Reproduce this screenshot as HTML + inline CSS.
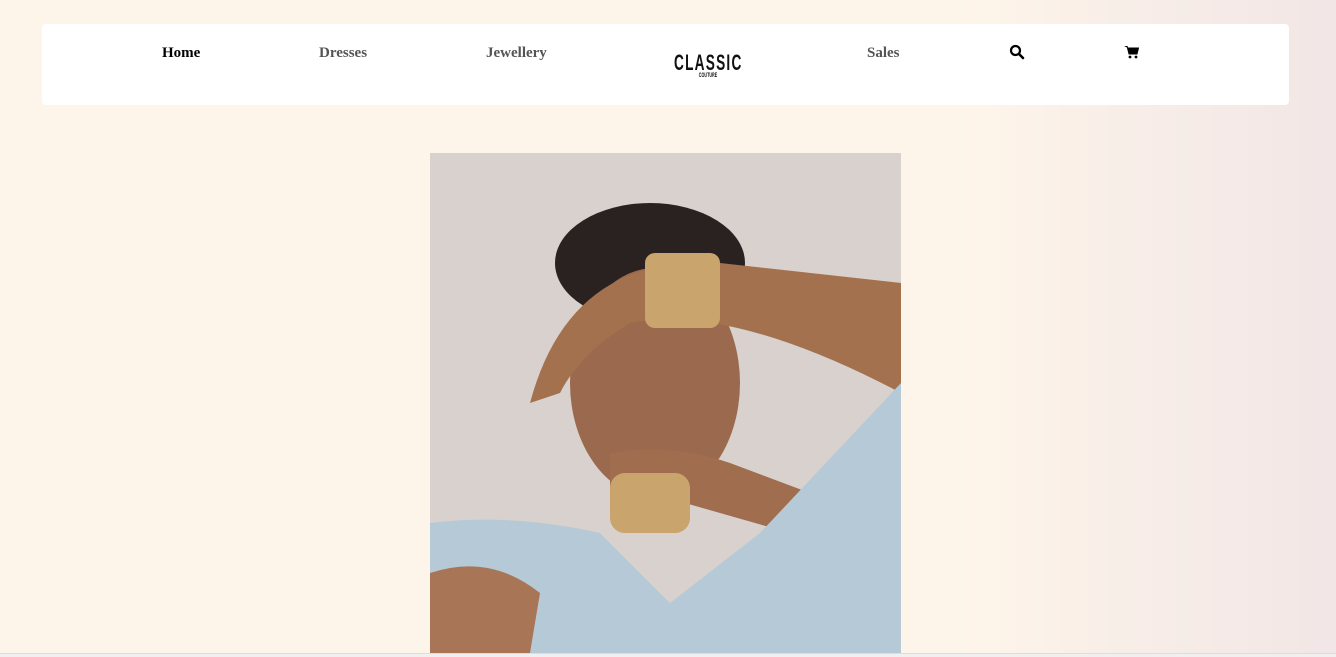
<!DOCTYPE html>
<html><head><style>
html,body{margin:0;padding:0;width:1336px;height:657px;overflow:hidden;font-family:"Liberation Serif",serif}
body{background:linear-gradient(90deg,#fef5ea 0,#fef5ea 72%,#f9efe8 82%,#f2e6e6 100%);position:relative}
.nav{position:absolute;left:42px;top:24px;width:1247px;height:81px;background:#fff;border-radius:4px}
.nav a{position:absolute;top:21px;font-size:15px;font-weight:bold;color:#555;text-decoration:none}
.logo{position:absolute;left:632px;top:26px;font-family:"Liberation Sans",sans-serif;font-weight:bold;font-size:22px;letter-spacing:2px;transform:scaleX(.62);transform-origin:left;color:#111}
.logo small{position:absolute;left:40px;top:23px;font-size:6px;letter-spacing:0}
.img{position:absolute;left:430px;top:153px;width:471px;height:500px;overflow:hidden;
background:#d9d0cc}
.bottom{position:absolute;left:0;top:653px;width:1336px;height:4px;background:#f0f0f0;border-top:1px solid #ddd}
</style></head><body>
<div class="nav">
<a style="left:120px;color:#000">Home</a>
<a style="left:277px">Dresses</a>
<a style="left:444px">Jewellery</a>
<div class="logo">CLASSIC<small>COUTURE</small></div>
<a style="left:825px">Sales</a>
<svg style="position:absolute;left:967px;top:20px" width="16" height="16" viewBox="0 0 16 16"><circle cx="6.5" cy="6.5" r="4.5" fill="none" stroke="#000" stroke-width="2.2"/><path d="M10 10l4 4" stroke="#000" stroke-width="2.6" stroke-linecap="round"/></svg>
<svg style="position:absolute;left:1082px;top:21px" width="15" height="14" viewBox="0 0 15 14"><path d="M0 1h3l2 8h8l1.5-6H4" fill="#000"/><path d="M3 1l2 8h8l1.5-6H4" fill="#000" stroke="#000"/><circle cx="6" cy="12" r="1.4"/><circle cx="12" cy="12" r="1.4"/></svg>
</div>
<div class="img">
<svg width="471" height="500" viewBox="0 0 471 500">
<rect width="471" height="500" fill="#d9d1cd"/>
<ellipse cx="220" cy="110" rx="95" ry="60" fill="#2a2220"/>
<ellipse cx="225" cy="230" rx="85" ry="115" fill="#9b6a4e"/>
<path d="M100 250 Q140 100 290 110 L471 130 L471 240 Q300 150 200 170 Q150 200 130 240Z" fill="#a4714f"/>
<rect x="215" y="100" width="75" height="75" rx="10" fill="#c9a46c"/>
<path d="M180 300 Q240 290 300 310 L380 340 L360 380 L220 340 L180 360Z" fill="#a06d4e"/>
<path d="M0 370 Q80 360 170 380 L240 450 L330 380 L471 230 L471 500 L0 500Z" fill="#b6c9d6"/>
<path d="M0 420 Q60 400 110 440 L100 500 L0 500Z" fill="#a87656"/>
<rect x="180" y="320" width="80" height="60" rx="15" fill="#c9a46c"/>
</svg>
</div>
<div class="bottom"></div>
</body></html>
